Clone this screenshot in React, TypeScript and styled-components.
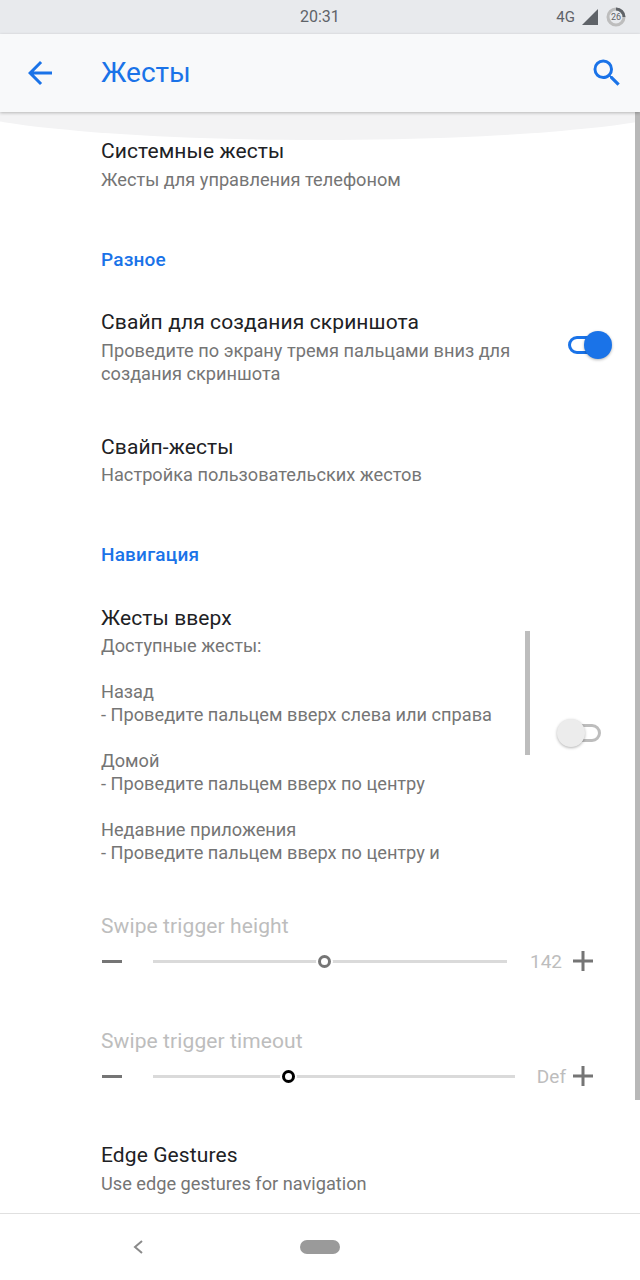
import React from "react";
import styled, { createGlobalStyle } from "styled-components";

const Global = createGlobalStyle`
  html, body { margin: 0; padding: 0; background: #fff; }
  * { box-sizing: border-box; }
  body { font-family: Roboto, "Noto Sans", sans-serif; }
`;

const Screen = styled.div`
  position: relative;
  width: 640px;
  height: 1280px;
  overflow: hidden;
  display: flex;
  flex-direction: column;
  background: #fff;
`;

const StatusBar = styled.div`
  height: 34px;
  flex: none;
  background: #e8eaed;
  display: flex;
  align-items: center;
  justify-content: flex-end;
  position: relative;
  padding: 0 14px 0 0;
  color: #5f6368;
  font-size: 16px;
`;

const Clock = styled.span`
  position: absolute;
  left: 300px;
  top: 6px;
  line-height: 22px;
  font-size: 16px;
`;

const NetLabel = styled.span`
  font-size: 15px;
  margin-right: 6px;
`;

const AppBar = styled.header`
  height: 78px;
  flex: none;
  background: #f8f9fa;
  display: flex;
  align-items: center;
  padding: 0 15px 0 22px;
  box-shadow: 0 1px 3px rgba(0, 0, 0, 0.25);
  position: relative;
  z-index: 2;
`;

const PageTitle = styled.h1`
  flex: 1;
  margin: 0 0 0 43px;
  font-size: 28px;
  font-weight: 400;
  color: #1a73e8;
  line-height: 32px;
`;

const OverscrollGlow = styled.div`
  position: absolute;
  left: -60px;
  right: -60px;
  top: 60px;
  height: 80px;
  border-radius: 50%;
  background: #f3f3f4;
  z-index: 1;
`;

const PageScrollbar = styled.div`
  position: absolute;
  right: 0;
  top: 112px;
  width: 5px;
  height: 988px;
  background: #b8b8b8;
  z-index: 1;
`;

const List = styled.main`
  flex: 1;
  position: relative;
  z-index: 1;
  padding: 26px 0 0 101px;
  display: flex;
  flex-direction: column;
`;

const Row = styled.section<{ $top: number }>`
  margin-top: ${(p) => p.$top}px;
  display: flex;
  align-items: center;
  position: relative;
`;

const RowText = styled.div`
  flex: 1;
  min-width: 0;
`;

const Title = styled.div<{ $off?: boolean }>`
  font-size: 21px;
  line-height: 26px;
  color: ${(p) => (p.$off ? "#bdbdbd" : "#202124")};
  letter-spacing: 0.1px;
`;

const Sub = styled.div<{ $gap?: number }>`
  margin-top: ${(p) => p.$gap ?? 4}px;
  font-size: 18.2px;
  line-height: 23px;
  color: #757575;
  white-space: pre-line;
`;

const SectionHead = styled.h2<{ $top: number }>`
  margin: ${(p) => p.$top}px 0 0;
  font-size: 19px;
  line-height: 24px;
  font-weight: 500;
  letter-spacing: 0.2px;
  color: #1a73e8;
`;

const Toggle = styled.div<{ $on?: boolean }>`
  position: absolute;
  top: calc(50% - ${(p) => (p.$on ? 16 : 15.5)}px);
  right: ${(p) => (p.$on ? 28 : 39)}px;
  width: 44px;
  height: 28px;
`;

const ToggleTrack = styled.div<{ $on?: boolean }>`
  position: absolute;
  left: ${(p) => (p.$on ? 0 : 14)}px;
  right: ${(p) => (p.$on ? 14 : 0)}px;
  top: 5px;
  height: 18px;
  border-radius: 9px;
  border: 3px solid ${(p) => (p.$on ? "#1a73e8" : "#bdbdbd")};
  background: #fff;
`;

const ToggleKnob = styled.div<{ $on?: boolean }>`
  position: absolute;
  top: 0;
  left: ${(p) => (p.$on ? 16 : 0)}px;
  width: 28px;
  height: 28px;
  border-radius: 50%;
  background: ${(p) => (p.$on ? "#1a73e8" : "#ececec")};
  box-shadow: 0 1px 3px rgba(0, 0, 0, 0.3);
`;

const InnerScrollbar = styled.div`
  position: absolute;
  left: 424px;
  top: 26px;
  width: 5px;
  height: 124px;
  background: #bdbdbd;
`;

const SliderBlock = styled.section<{ $top: number }>`
  margin-top: ${(p) => p.$top}px;
  padding-right: 46px;
`;

const SliderRow = styled.div`
  display: flex;
  align-items: center;
  height: 24px;
  margin-top: 10px;
`;

const Track = styled.div<{ $width: number }>`
  position: relative;
  width: ${(p) => p.$width}px;
  height: 3px;
  margin-left: 30px;
  background: #dadada;
  flex: none;
`;

const Thumb = styled.div<{ $dark?: boolean }>`
  position: absolute;
  top: -5px;
  width: 13px;
  height: 13px;
  border-radius: 50%;
  background: #fff;
  border: 3px solid ${(p) => (p.$dark ? "#000" : "#757575")};
  box-shadow: 0 0 0 2px #fff;
`;

const SliderValue = styled.span<{ $pad: number }>`
  flex: 1;
  text-align: right;
  font-size: 19px;
  color: #bdbdbd;
  padding-right: ${(p) => p.$pad}px;
`;

const NavBar = styled.nav`
  height: 67px;
  flex: none;
  border-top: 1px solid #e0e0e0;
  position: relative;
  z-index: 2;
  background: #fff;
  display: flex;
  align-items: center;
  padding: 0 0 0 132px;
`;

const HomePill = styled.div`
  width: 40px;
  height: 14px;
  border-radius: 7px;
  background: #9a9a9a;
  margin-left: 156px;
`;

const Icon = styled.svg`
  flex: none;
  display: block;
`;

const Minus = () => (
  <Icon width="22" height="22" viewBox="0 0 22 22">
    <rect x="1" y="10" width="20" height="3" fill="#757575" />
  </Icon>
);

const Plus = () => (
  <Icon width="22" height="22" viewBox="0 0 22 22">
    <path d="M1 9.5h8.5V1h3v8.5H21v3h-8.5V21h-3v-8.5H1z" fill="#757575" />
  </Icon>
);

const Slider = ({ top, title, width, at, value, dark, pad }: { top: number; title: string; width: number; at: number; value: string; dark?: boolean; pad: number }) => (
  <SliderBlock $top={top}>
    <Title $off>{title}</Title>
    <SliderRow>
      <Minus />
      <Track $width={width}>
        <Thumb $dark={dark} style={{ left: at - 6 }} />
      </Track>
      <SliderValue $pad={pad}>{value}</SliderValue>
      <Plus />
    </SliderRow>
  </SliderBlock>
);

export default function App() {
  return (
    <Screen>
      <Global />
      <StatusBar>
        <Clock>20:31</Clock>
        <NetLabel>4G</NetLabel>
        <Icon width="18" height="18" viewBox="0 0 18 18">
          <path d="M17 1v16H1z" fill="#5f6368" />
        </Icon>
        <Icon width="20" height="20" viewBox="0 0 20 20" style={{ marginLeft: 7 }}>
          <circle cx="10" cy="10" r="8" fill="none" stroke="#bdbdbd" strokeWidth="3" />
          <path d="M10 2a8 8 0 0 1 8 8" fill="none" stroke="#5f6368" strokeWidth="3" />
          <text x="10" y="13" textAnchor="middle" fontSize="9" fontFamily="Roboto" fill="#5f6368">26</text>
        </Icon>
      </StatusBar>
      <AppBar>
        <Icon width="36" height="36" viewBox="0 0 24 24">
          <path d="M20 11H7.83l5.59-5.59L12 4l-8 8 8 8 1.41-1.41L7.83 13H20z" fill="#1a73e8" />
        </Icon>
        <PageTitle>Жесты</PageTitle>
        <Icon width="36" height="36" viewBox="0 0 24 24">
          <path d="M15.5 14h-.79l-.28-.27A6.47 6.47 0 0 0 16 9.5 6.5 6.5 0 1 0 9.5 16c1.61 0 3.09-.59 4.23-1.57l.27.28v.79l5 4.99L20.49 19zm-6 0C7.01 14 5 11.99 5 9.5S7.01 5 9.5 5 14 7.01 14 9.5 11.99 14 9.5 14z" fill="#1a73e8" />
        </Icon>
      </AppBar>
      <OverscrollGlow />
      <PageScrollbar />
      <List>
        <Row $top={0}>
          <RowText>
            <Title>Системные жесты</Title>
            <Sub>Жесты для управления телефоном</Sub>
          </RowText>
        </Row>
        <SectionHead $top={57}>Разное</SectionHead>
        <Row $top={37}>
          <RowText>
            <Title>Свайп для создания скриншота</Title>
            <Sub>{"Проведите по экрану тремя пальцами вниз для\nсоздания скриншота"}</Sub>
          </RowText>
          <Toggle $on>
            <ToggleTrack $on />
            <ToggleKnob $on />
          </Toggle>
        </Row>
        <Row $top={49}>
          <RowText>
            <Title>Свайп-жесты</Title>
            <Sub $gap={3}>Настройка пользовательских жестов</Sub>
          </RowText>
        </Row>
        <SectionHead $top={57}>Навигация</SectionHead>
        <Row $top={38}>
          <RowText>
            <Title>Жесты вверх</Title>
            <Sub $gap={3}>{"Доступные жесты:\n\u00a0\nНазад\n- Проведите пальцем вверх слева или справа\n\u00a0\nДомой\n- Проведите пальцем вверх по центру\n\u00a0\nНедавние приложения\n- Проведите пальцем вверх по центру и"}</Sub>
          </RowText>
          <InnerScrollbar />
          <Toggle>
            <ToggleTrack />
            <ToggleKnob />
          </Toggle>
        </Row>
        <Slider top={49} title="Swipe trigger height" width={354} at={171} value="142" pad={10} />
        <Slider top={55} title="Swipe trigger timeout" width={362} at={135} value="Def" dark pad={6} />
        <Row $top={54}>
          <RowText>
            <Title>Edge Gestures</Title>
            <Sub $gap={4}>Use edge gestures for navigation</Sub>
          </RowText>
        </Row>
      </List>
      <NavBar>
        <Icon width="12" height="16" viewBox="0 0 12 16">
          <path d="M10 2 L3 8 L10 14" fill="none" stroke="#8a8a8a" strokeWidth="2" />
        </Icon>
        <HomePill />
      </NavBar>
    </Screen>
  );
}
